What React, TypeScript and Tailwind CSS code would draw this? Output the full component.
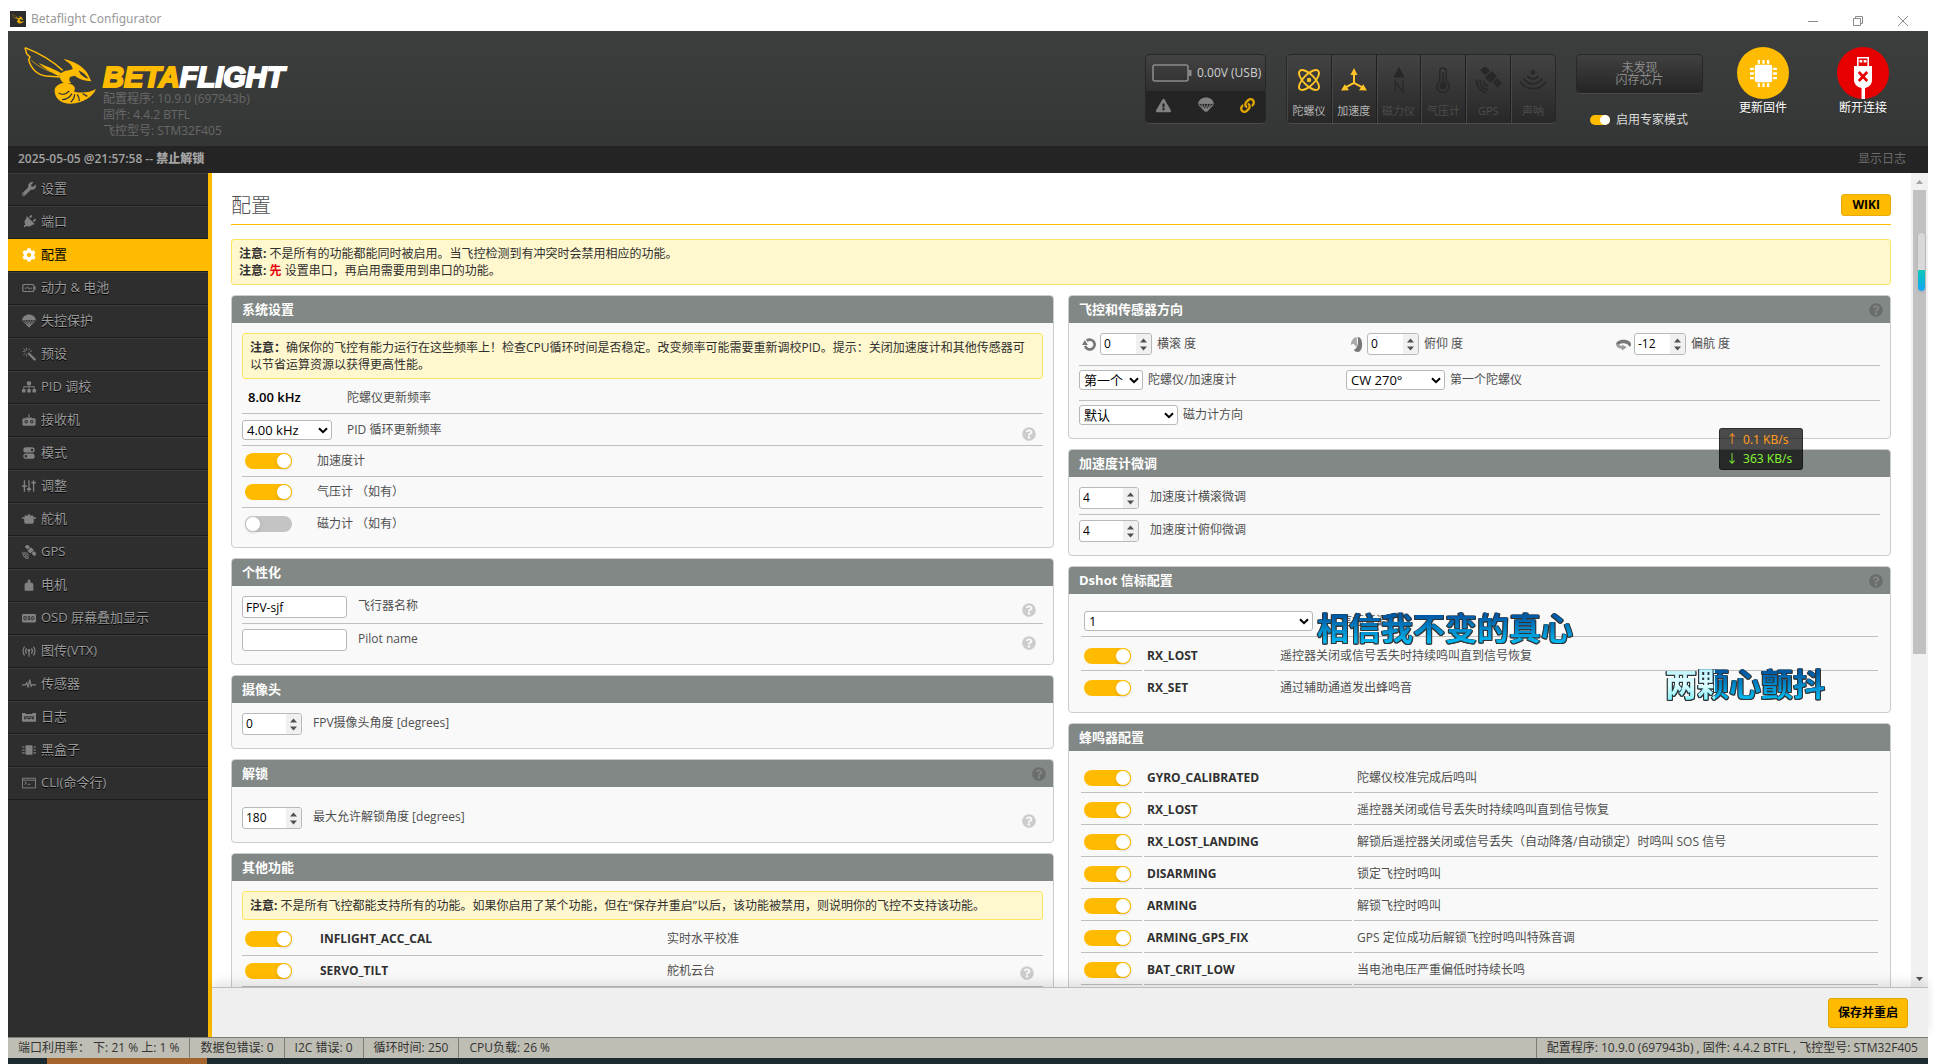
import type { ReactNode } from 'react';
import clsx from 'clsx';
import {
  FaCog,
  FaExclamationTriangle,
  FaLink,
  FaPlug,
  FaQuestionCircle,
  FaSitemap,
  FaWrench,
} from 'react-icons/fa';

interface IconProps {
  className?: string;
}

interface SvgProps extends IconProps {
  viewBox?: string;
  children: ReactNode;
}

const Svg = ({ className, viewBox = '0 0 16 16', children }: SvgProps) => (
  <svg className={className} viewBox={viewBox} fill="currentColor" aria-hidden="true">
    {children}
  </svg>
);

const BatteryIcon = ({ className }: IconProps) => (
  <Svg className={className}>
    <rect x="1" y="4" width="12.5" height="8" rx="1.2" fill="none" stroke="currentColor" strokeWidth="1.4" />
    <path d="M14 6h1.6v4H14z" />
    <path d="M3 8.2h2.4l1-1.7 1.8 3 1-1.3h2.4" fill="none" stroke="currentColor" />
  </Svg>
);

const ParachuteIcon = ({ className }: IconProps) => (
  <Svg className={className}>
    <path d="M0 7.400C.5 3.200 3.800.6 8 .6s7.500 2.600 8 6.800c-1-.9-2.600-.9-3.500 0-1-.9-2.200-.9-3 0-.8-.9-2.200-.9-3 0-.9-.9-2-.9-3 0-.9-.9-2.500-.9-3.500 0z" />
    <path
      d="M.8 7.500 7 14M15.200 7.500 9 14M3.700 7.500 7.300 14M12.300 7.500 8.700 14M6.500 7.500 8 14M9.500 7.500 8 14"
      fill="none"
      stroke="currentColor"
      strokeWidth="1.100"
    />
    <path d="M6 13h4l-2 2.600z" />
  </Svg>
);

const WandIcon = ({ className }: IconProps) => (
  <Svg className={className}>
    <path d="m6.200 7.600 1.600-1.600 7.600 7.200a1.300 1.300 0 0 1-1.900 1.900z" />
    <path
      d="M5 0.800v3.200M.8 5h3M1.800 1.800 4 4M9.200 1.500 7.200 3.700M1.600 9 3.800 7M5 8.200v2.800M9 4.700h2.400"
      fill="none"
      stroke="currentColor"
      strokeWidth="1"
    />
  </Svg>
);

const TransmitterIcon = ({ className }: IconProps) => (
  <Svg className={className}>
    <path d="M7.400 1h1.200v4H7.400z" />
    <path
      fillRule="evenodd"
      d="M5 5h6v1h3a1.500 1.500 0 0 1 1.500 1.500v5.500a1.500 1.500 0 0 1-1.500 1.500H2A1.500 1.500 0 0 1 .5 13V7.500A1.500 1.500 0 0 1 2 6h3zM4.800 8a2 2 0 1 0 0 4 2 2 0 0 0 0-4zm6.400 0a2 2 0 1 0 0 4 2 2 0 0 0 0-4z"
    />
    <circle cx="4.800" cy="10" r=".9" />
    <circle cx="11.200" cy="10" r=".9" />
  </Svg>
);

const ModesIcon = ({ className }: IconProps) => (
  <Svg className={className}>
    <path
      fillRule="evenodd"
      d="M4.500 1.500h7a3 3 0 0 1 0 6h-7a3 3 0 0 1 0-6zm7 1.500a1.500 1.500 0 1 0 0 3 1.500 1.500 0 0 0 0-3zM4.500 8.700h7a3 3 0 0 1 0 6h-7a3 3 0 0 1 0-6zm0 1.500a1.500 1.500 0 1 0 0 3 1.500 1.500 0 0 0 0-3z"
    />
  </Svg>
);

const SlidersIcon = ({ className }: IconProps) => (
  <Svg className={className}>
    <path d="M2 1.500h1.500v13H2zM.3 7h5v2.200h-5zM7.200 1.500h1.500v13H7.200zM5.600 10.500h4.800v2.200H5.600zM12.500 1.500H14v13h-1.500zM10.800 3h5v2.200h-5z" />
  </Svg>
);

const ServoIcon = ({ className }: IconProps) => (
  <Svg className={className}>
    <path d="M7 2.500h2V4h4v2h3v1.600h-2.500V11a2.500 2.500 0 0 1-2.500 2.500H5A2.500 2.500 0 0 1 2.500 11V7.600H0V6h3V4h4z" />
  </Svg>
);

const SatelliteIcon = ({ className }: IconProps) => (
  <Svg className={className} viewBox="0 0 24 24">
    <g transform="rotate(45 15 9)">
      <rect x="11.500" y="5" width="7" height="8.500" />
      <rect x="3.500" y="6" width="6.500" height="6" />
      <rect x="20" y="6" width="6.500" height="6" />
      <path d="M9 8.500h12v1H9z" />
    </g>
    <path
      d="M8.500 12.500a3.500 3.500 0 0 0 3.500 4.800M5 12a7.500 7.500 0 0 0 7 9M1.500 11.500A11.500 11.500 0 0 0 11 24"
      fill="none"
      stroke="currentColor"
      strokeWidth="1.800"
    />
  </Svg>
);

const MotorIcon = ({ className }: IconProps) => (
  <Svg className={className}>
    <path d="M8 1l1.600 2.200v2.300h1.400c1.300.3 2 1.200 2 2.400v5.600a1 1 0 0 1-1 1H4a1 1 0 0 1-1-1V7.900c0-1.200.7-2.100 2-2.400h1.400V3.200z" />
  </Svg>
);

const OsdIcon = ({ className }: IconProps) => (
  <Svg className={className}>
    <rect x="0" y="3.500" width="16" height="9.500" rx="1.500" />
    <path
      d="M2.200 6.500h2.600v3.400H2.200zM9.300 6.500H6.900v1.700h2.300v1.700H6.700M11.200 6.500h1.600l1 .8v1.800l-1 .8h-1.600z"
      fill="none"
      stroke="#2e2e2e"
    />
  </Svg>
);

const VtxIcon = ({ className }: IconProps) => (
  <Svg className={className}>
    <path
      d="M3 3C.6 5.500.6 10.500 3 13M5.300 5c-1.300 1.600-1.300 4.400 0 6M13 3c2.400 2.500 2.400 7.500 0 10M10.700 5c1.300 1.600 1.300 4.400 0 6M8 8v6.500"
      fill="none"
      stroke="currentColor"
      strokeWidth="1.400"
    />
    <circle cx="8" cy="7.300" r="1.500" />
  </Svg>
);

const PulseIcon = ({ className }: IconProps) => (
  <Svg className={className}>
    <path d="M0 9h4l1.500-2.500L7 12l1.800-9 1.600 7.500L11.500 9H16" fill="none" stroke="currentColor" strokeWidth="1.400" />
  </Svg>
);

const LogIcon = ({ className }: IconProps) => (
  <Svg className={className}>
    <path
      fillRule="evenodd"
      d="M0 3.500h4v1.200h8V3.500h4v9a1 1 0 0 1-1 1H1a1 1 0 0 1-1-1zm2.500 3.700v3.300h2l.8-1h1l.7 1h2l.7-1h1l.8 1h2V7.200z"
    />
    <path d="M4 7.800h2v1H4zM7 7.800h2v1H7zM10 7.800h2v1h-2z" />
  </Svg>
);

const BlackboxIcon = ({ className }: IconProps) => (
  <Svg className={className}>
    <rect x="4" y="2.500" width="8" height="11" rx="1" />
    <path d="M0 4h3v1.200H0zM0 7.300h3v1.200H0zM0 10.700h3v1.200H0zM13 4h3v1.200h-3zM13 7.300h3v1.200h-3zM13 10.700h3v1.200h-3z" />
  </Svg>
);

const CliIcon = ({ className }: IconProps) => (
  <Svg className={className}>
    <path d="M.6 2.600h14.800v11H.6zM.6 4.800h14.800M3 6.800l2 1.400-2 1.400M6.500 9.500h3" fill="none" stroke="currentColor" strokeWidth="1.100" />
  </Svg>
);

const GyroIcon = ({ className }: IconProps) => (
  <Svg className={className} viewBox="0 0 24 24">
    <g fill="none" stroke="currentColor" strokeWidth="1.900">
      <ellipse cx="12" cy="12" rx="13" ry="5.500" transform="rotate(45 12 12)" />
      <ellipse cx="12" cy="12" rx="13" ry="5.500" transform="rotate(-45 12 12)" />
    </g>
    <circle cx="12" cy="12" r="2.200" />
  </Svg>
);

const AccelIcon = ({ className }: IconProps) => (
  <Svg className={className} viewBox="0 0 28 26">
    <path d="M14 6v10M14 16l-9 5M14 16l9 5" stroke="currentColor" strokeWidth="2.200" />
    <path d="M14 0l3.800 7.500h-7.600zM0 24.500l4-7 4.600 6.600zM28 24.500l-4-7-4.600 6.600z" />
  </Svg>
);

const MagIcon = ({ className }: IconProps) => (
  <Svg className={className} viewBox="0 0 24 30">
    <path d="M12 0l6.500 12h-13z" />
    <path d="M7.500 29V16.500l9 12.500V16" fill="none" stroke="currentColor" strokeWidth="1.500" />
  </Svg>
);

const BaroIcon = ({ className }: IconProps) => (
  <Svg className={className} viewBox="0 0 24 28">
    <path
      d="M8.500 4.500a3.500 3.500 0 0 1 7 0v11a6.500 6.500 0 1 1-7 0z"
      fill="none"
      stroke="currentColor"
      strokeWidth="1.600"
    />
    <path d="M11 6h2v10.300a4 4 0 1 1-2 0z" />
  </Svg>
);

const SonarIcon = ({ className }: IconProps) => (
  <Svg className={className} viewBox="0 0 30 24">
    <circle cx="15" cy="4" r="2.500" />
    <path d="M9 7.500c3 4.500 9 4.500 12 0M5 10.500c5 7.500 15 7.500 20 0M1 13.500c7 10.500 21 10.500 28 0" fill="none" stroke="currentColor" strokeWidth="2" />
  </Svg>
);

const ChipIcon = ({ className }: IconProps) => (
  <Svg className={className} viewBox="0 0 28 28">
    <rect x="5" y="5" width="18" height="18" rx="2" />
    <path d="M8 0h2.400v4H8zM12.800 0h2.400v4h-2.400zM17.600 0H20v4h-2.400zM8 24h2.400v4H8zM12.800 24h2.400v4h-2.400zM17.600 24H20v4h-2.400zM0 8h4v2.400H0zM0 12.800h4v2.400H0zM0 17.600h4V20H0zM24 8h4v2.400h-4zM24 12.800h4v2.400h-4zM24 17.600h4V20h-4z" />
  </Svg>
);

const UsbIcon = ({ className }: IconProps) => (
  <Svg className={className} viewBox="0 0 18 42">
    <path fillRule="evenodd" d="M3 0h12v9h3v14c0 4-2.500 7-7 8v11H7.500V31C3 30 0 27 0 23V9h3zm1.600 1.600V9h8.800V1.600z" />
    <path d="M5.500 3h2.800v2.500H5.500zM9.700 3h2.800v2.500H9.700z" />
    <path d="M4.800 15l8.400 9M13.200 15l-8.400 9" stroke="#e60000" strokeWidth="2.600" />
  </Svg>
);

const RollIcon = ({ className }: IconProps) => (
  <Svg className={className}>
    <path d="M3.300 9.500A5.200 5.200 0 1 0 5 4" fill="none" stroke="currentColor" strokeWidth="2.800" />
    <path d="M0 8.500 3 3.200 6.300 8.500z" />
  </Svg>
);

const PitchIcon = ({ className }: IconProps) => (
  <Svg className={className}>
    <path d="M9 0c3.500 0 5 3.700 5 8s-1.500 8-5 8c-2 0-3.300-1-4-2.600C9.500 13.500 10.500 4 9 0z" />
    <path d="M8.500 3.500v7L6.300 9.300C5.800 7.500 5 6.800 2 8.500 2 4 5 .5 8 0z" opacity=".6" />
  </Svg>
);

const YawIcon = ({ className }: IconProps) => (
  <Svg className={className}>
    <path d="M0 7.500C.5 4.500 4 2.800 8 2.800s8 1.700 8 4.700c0 1.500-.5 2.500-1.500 3.200-1-3.200-7-5.200-11-3z" />
    <path d="M0 7.500c0 3.300 3 4.800 6 5l.5 2 5-3.500-5-3 .2 1.500C5.500 9.500 3.500 9 3.500 7.500z" opacity=".7" />
  </Svg>
);

const BeeLogo = ({ className }: IconProps) => (
  <Svg className={className} viewBox="0 0 216 172">
    <g fill="none" stroke="currentColor" strokeLinejoin="round">
      <path d="M3 4 8 22 18 32 14 40C20 66 40 86 66 89L110 92M3 4C44 20 86 44 116 72" strokeWidth="4.500" />
      <path d="M22 42C44 62 76 78 108 84" strokeWidth="2" />
    </g>
    <path d="M44 50C66 60 96 70 114 82L104 90C88 80 62 68 44 50z" />
    <path d="M118 38C156 46 178 62 190 80L202 105C182 104 164 98 152 88L138 92C134 100 136 106 142 110L120 110C108 104 104 90 112 80C124 70 136 74 146 68C146 56 132 48 118 38z" />
    <path d="M164 72C176 78 186 86 194 98C180 94 168 86 164 72z" fill="#383a39" />
    <path d="M92 128C100 112 116 108 134 111C152 116 156 126 150 136C176 142 198 138 216 128C206 152 178 170 140 172C110 172 90 156 92 128z" />
    <path
      d="M104 140C116 148 126 144 136 134M114 160C128 160 138 152 144 142M140 168C148 160 152 152 152 144M166 164C166 156 164 150 160 144M190 150 176 142"
      fill="none"
      stroke="#373938"
      strokeWidth="4"
    />
  </Svg>
);

const PlugIcon = ({ className }: IconProps) => <FaPlug className={clsx(className, 'rotate-45')} />;

const MENU = [
  { label: '设置', Icon: FaWrench },
  { label: '端口', Icon: PlugIcon },
  { label: '配置', Icon: FaCog },
  { label: '动力 & 电池', Icon: BatteryIcon },
  { label: '失控保护', Icon: ParachuteIcon },
  { label: '预设', Icon: WandIcon },
  { label: 'PID 调校', Icon: FaSitemap },
  { label: '接收机', Icon: TransmitterIcon },
  { label: '模式', Icon: ModesIcon },
  { label: '调整', Icon: SlidersIcon },
  { label: '舵机', Icon: ServoIcon },
  { label: 'GPS', Icon: SatelliteIcon },
  { label: '电机', Icon: MotorIcon },
  { label: 'OSD 屏幕叠加显示', Icon: OsdIcon },
  { label: '图传(VTX)', Icon: VtxIcon },
  { label: '传感器', Icon: PulseIcon },
  { label: '日志', Icon: LogIcon },
  { label: '黑盒子', Icon: BlackboxIcon },
  { label: 'CLI(命令行)', Icon: CliIcon },
];

const SENSORS = [
  { label: '陀螺仪', Icon: GyroIcon, on: true },
  { label: '加速度', Icon: AccelIcon, on: true },
  { label: '磁力仪', Icon: MagIcon, on: false },
  { label: '气压计', Icon: BaroIcon, on: false },
  { label: 'GPS', Icon: SatelliteIcon, on: false },
  { label: '声呐', Icon: SonarIcon, on: false },
];

const DSHOT_BEACONS = [
  { name: 'RX_LOST', desc: '遥控器关闭或信号丢失时持续鸣叫直到信号恢复' },
  { name: 'RX_SET', desc: '通过辅助通道发出蜂鸣音' },
];

const BEEPERS = [
  { name: 'GYRO_CALIBRATED', desc: '陀螺仪校准完成后鸣叫' },
  { name: 'RX_LOST', desc: '遥控器关闭或信号丢失时持续鸣叫直到信号恢复' },
  { name: 'RX_LOST_LANDING', desc: '解锁后遥控器关闭或信号丢失（自动降落/自动锁定）时鸣叫 SOS 信号' },
  { name: 'DISARMING', desc: '锁定飞控时鸣叫' },
  { name: 'ARMING', desc: '解锁飞控时鸣叫' },
  { name: 'ARMING_GPS_FIX', desc: 'GPS 定位成功后解锁飞控时鸣叫特殊音调' },
  { name: 'BAT_CRIT_LOW', desc: '当电池电压严重偏低时持续长鸣' },
];

const FEATURES = [
  { name: 'INFLIGHT_ACC_CAL', desc: '实时水平校准', help: false },
  { name: 'SERVO_TILT', desc: '舵机云台', help: true },
];

const STATS = ['端口利用率： 下: 21 % 上: 1 %', '数据包错误: 0', 'I2C 错误: 0', '循环时间: 250', 'CPU负载: 26 %'];

const Help = ({ className }: IconProps) => (
  <FaQuestionCircle className={clsx('size-[14px] shrink-0', className)} aria-hidden="true" />
);

const Toggle = ({ id, checked = false }: { id: string; checked?: boolean }) => (
  <input
    id={id}
    type="checkbox"
    role="switch"
    defaultChecked={checked}
    className="block h-4 w-[47px] shrink-0 appearance-none rounded-full bg-[#c4c4c4] before:block before:size-4 before:rounded-full before:border before:border-[#c4c4c4] before:bg-white before:shadow checked:bg-[#ffbb00] checked:before:ml-[31px] checked:before:border-[#ffbb00]"
  />
);

const Select = ({ id, value, className }: { id: string; value: string; className: string }) => (
  <div className={clsx('relative shrink-0', className)}>
    <select
      id={id}
      defaultValue={value}
      className="block h-5 w-full appearance-none rounded-[3px] border border-[#b8b8b8] bg-white pl-1 text-[13px] leading-4 text-black"
    >
      <option>{value}</option>
    </select>
    <svg className="pointer-events-none absolute top-[7px] right-1 h-[7px] w-[10px]" viewBox="0 0 10 7" aria-hidden="true">
      <path d="M1 1.200 5 5.200 9 1.200" fill="none" stroke="#000" strokeWidth="2" />
    </svg>
  </div>
);

const NumberInput = ({ id, value, className }: { id: string; value: number; className: string }) => (
  <div className={clsx('flex h-[22px] shrink-0 overflow-hidden rounded-[3px] border border-[#b8b8b8] bg-white', className)}>
    <input
      id={id}
      type="number"
      defaultValue={value}
      className="w-full min-w-0 appearance-none pl-[3px] text-xs text-black [appearance:textfield] [&::-webkit-inner-spin-button]:appearance-none"
    />
    <svg className="h-5 w-[15px] shrink-0 bg-[#f0f0f0]" viewBox="0 0 15 20" aria-hidden="true">
      <path d="M4 8.500h7L7.500 4.500zM4 12.500h7l-3.500 4z" fill="#505050" />
    </svg>
  </div>
);

const Note = ({ children }: { children: ReactNode }) => (
  <div className="rounded-[3px] border border-[#ffe55f] bg-[#fff7cd] px-[7px] py-[5px] leading-[17px] text-[#303030]">
    {children}
  </div>
);

interface CardProps {
  title: string;
  help?: boolean;
  className?: string;
  children: ReactNode;
}

const Card = ({ title, help, className, children }: CardProps) => (
  <section className="overflow-hidden rounded-[4px] border border-[#ccc] bg-[#f9f9f9]">
    <header className="flex h-[27px] items-center justify-between bg-[#828885] pr-[7px] pl-[10px] text-[13px] font-bold text-white">
      <h2>{title}</h2>
      {help && <Help className="text-[#6a6d6b]" />}
    </header>
    <div className={clsx('px-[10px] pt-[10px]', className)}>{children}</div>
  </section>
);

const BeeperTable = ({ prefix, rows, nameWidth }: { prefix: string; rows: typeof BEEPERS; nameWidth: string }) => (
  <table className="w-full table-fixed border-separate border-spacing-[2px] text-left">
    <tbody>
      {rows.map(({ name, desc }, i) => {
        const line = prefix === 'dshot' && i === rows.length - 1 ? '' : 'border-b border-[#bfbfbf]';
        return (
          <tr key={name} className="h-[30px]">
            <td className={clsx('w-[61px] px-[3px]', line)}>
              <Toggle id={`${prefix}-${name}`} checked />
            </td>
            <th scope="row" className={clsx('px-[3px] font-bold text-[#303030]', nameWidth, line)}>
              <label htmlFor={`${prefix}-${name}`}>{name}</label>
            </th>
            <td className={clsx('px-[3px]', line)}>{desc}</td>
          </tr>
        );
      })}
    </tbody>
  </table>
);

const TitleBar = () => (
  <div className="flex h-[31px] shrink-0 items-end justify-between pr-[15px] pl-[2px]">
    <div className="flex h-6 items-center gap-[5px] font-['Noto_Sans',sans-serif] text-xs text-[#999]">
      <span className="flex size-4 items-center justify-center bg-[#2c2c2c] text-[#ffbb00]">
        <BeeLogo className="w-3" />
      </span>
      Betaflight Configurator
    </div>
    <div className="flex gap-[25px] text-[#8a8a8a]">
      <button type="button" aria-label="最小化" className="flex size-5 items-center justify-center">
        <svg className="size-[10px]" viewBox="0 0 10 10">
          <path d="M0 5.500h10" stroke="currentColor" />
        </svg>
      </button>
      <button type="button" aria-label="还原" className="flex size-5 items-center justify-center">
        <svg className="size-[10px]" viewBox="0 0 10 10" fill="none" stroke="currentColor">
          <path d="M.5 2.500h7v7h-7zM2.500 2.500v-2h7v7h-2" />
        </svg>
      </button>
      <button type="button" aria-label="关闭" className="flex size-5 items-center justify-center">
        <svg className="size-[10px]" viewBox="0 0 10 10" stroke="currentColor">
          <path d="M0 0l10 10M10 0 0 10" />
        </svg>
      </button>
    </div>
  </div>
);

const Header = () => (
  <header className="flex h-[115px] shrink-0 justify-between bg-linear-to-b from-[#3d3f3e] to-[#343635] pr-[26px] pl-4">
    <div className="flex gap-[7px] pt-[15px]">
      <BeeLogo className="h-[58px] w-[72px] text-[#ffbb00]" />
      <div className="pt-[17px]">
        <div className="font-['Liberation_Sans',Arial,sans-serif] text-[29px] leading-7 font-bold text-white italic [-webkit-text-stroke:2px_currentColor]">
          <span className="text-[#ffbb00]">BETA</span>FLIGHT
        </div>
        <div className="leading-4 text-[#686868]">
          <p>配置程序: 10.9.0 (697943b)</p>
          <p>固件: 4.4.2 BTFL</p>
          <p>飞控型号: STM32F405</p>
        </div>
      </div>
    </div>

    <div className="flex items-start gap-5 pt-[16px] text-white">
      <div className="mt-[7px] h-[70px] w-[121px] overflow-hidden rounded-[5px] border border-b-[#4c4c4c] border-[#272727] bg-[#242424]">
        <div className="flex h-9 items-center bg-linear-to-b from-[#434343] to-[#2f2f2f] pl-[6px]">
          <svg className="h-[18px] w-10 text-[#8a8a8a]" viewBox="0 0 40 18" fill="none" stroke="currentColor">
            <rect x="1" y="1" width="35" height="16" rx="2" strokeWidth="1.600" />
            <path d="M38 6v6" strokeWidth="3" />
          </svg>
          <span className="pl-[5px] text-xs text-[#d0d0d0]">0.00V (USB)</span>
        </div>
        <div className="flex h-8 items-center justify-between px-[10px] pb-1 text-[#818181]">
          <FaExclamationTriangle className="size-[15px]" />
          <ParachuteIcon className="size-4" />
          <FaLink className="size-[15px] text-[#e0a500]" />
        </div>
      </div>

      <ul className="mt-[7px] flex h-[70px] w-[270px] overflow-hidden rounded-[5px] border border-b-[#4c4c4c] border-[#272727] bg-linear-to-b from-[#434343] to-[#282828]">
        {SENSORS.map(({ label, Icon, on }) => (
          <li
            key={label}
            className={clsx(
              'flex flex-1 flex-col items-center border-l border-[#1f1f1f] shadow-[inset_1px_0_0_#474747] first:border-l-0',
              on ? 'text-[#b5b5b5]' : 'text-[#4c4c4c]',
            )}
          >
            <div className="flex h-[50px] items-center justify-center">
              <Icon className={clsx('w-7', on ? 'h-6 text-[#ffc427]' : 'h-[26px] text-[#282828]')} />
            </div>
            <span className="text-[11px] leading-[11px]">{label}</span>
          </li>
        ))}
      </ul>

      <div className="mt-[7px] w-[127px]">
        <p className="flex h-10 items-center justify-center rounded-[5px] border border-b-[#4c4c4c] border-[#272727] bg-linear-to-b from-[#414141] to-[#242424] text-center leading-3 text-[#8c8c8c]">
          未发现
          <br />
          闪存芯片
        </p>
        <label className="mt-[18px] ml-[14px] flex items-center gap-[6px] leading-4 text-[#ddd]">
          <input
            type="checkbox"
            role="switch"
            defaultChecked
            className="h-[10px] w-5 appearance-none rounded-full bg-[#ffbb00] before:ml-[10px] before:block before:size-[10px] before:rounded-full before:bg-white"
          />
          启用专家模式
        </label>
      </div>

      <div className="ml-[14px] flex gap-12 pr-[13px]">
        <button type="button" className="flex w-[52px] flex-col items-center">
          <span className="flex size-[52px] items-center justify-center rounded-full bg-[#ffbb00]">
            <ChipIcon className="size-[27px]" />
          </span>
          <span className="leading-[18px] text-shadow-sm">更新固件</span>
        </button>
        <button type="button" className="flex w-[52px] flex-col items-center">
          <span className="flex size-[52px] items-end justify-center rounded-full bg-[#e60000]">
            <UsbIcon className="h-[42px] w-[18px]" />
          </span>
          <span className="leading-[18px] text-shadow-sm">断开连接</span>
        </button>
      </div>
    </div>
  </header>
);

const Sidebar = () => (
  <nav className="w-[204px] shrink-0 border-r-4 border-[#ffbb00] bg-[#2e2e2e]">
    <ul>
      {MENU.map(({ label, Icon }) => {
        const active = label === '配置';
        return (
          <li key={label}>
            <a
              href="#"
              className={clsx(
                'flex h-[33px] items-center gap-[5px] border-y border-b-[#1c1c1c] pb-[2px] pl-[14px] text-[13px]',
                active ? 'border-t-[#ffbb00] bg-[#ffbb00] text-black' : 'border-t-[#3b3b3b] text-[#999] text-shadow-[0_1px_0_#000]',
              )}
            >
              <Icon className={clsx('size-[14px]', active ? 'text-white' : 'text-[#818181]')} />
              {label}
            </a>
          </li>
        );
      })}
    </ul>
  </nav>
);

const LeftColumn = () => (
  <div className="flex flex-col gap-[10px]">
    <Card title="系统设置" className="pb-2">
      <Note>
        <b>注意：</b>
        确保你的飞控有能力运行在这些频率上！检查CPU循环时间是否稳定。改变频率可能需要重新调校PID。提示：关闭加速度计和其他传感器可以节省运算资源以获得更高性能。
      </Note>
      <div className="mt-1 flex h-[31px] items-center border-b border-[#bfbfbf]">
        <span className="w-[105px] pl-[6px] text-[13px] font-semibold text-black">8.00 kHz</span>
        <span>陀螺仪更新频率</span>
      </div>
      <div className="flex h-8 items-center border-b border-[#bfbfbf]">
        <Select id="pid-rate" value="4.00 kHz" className="w-[90px]" />
        <label htmlFor="pid-rate" className="flex-1 pl-[15px]">
          PID 循环更新频率
        </label>
        <Help className="mt-2 mr-[7px] text-[#ccc]" />
      </div>
      <div className="flex h-[31px] items-center gap-[25px] border-b border-[#bfbfbf] pl-[3px]">
        <Toggle id="acc" checked />
        <label htmlFor="acc">加速度计</label>
      </div>
      <div className="flex h-[31px] items-center gap-[25px] border-b border-[#bfbfbf] pl-[3px]">
        <Toggle id="baro" checked />
        <label htmlFor="baro">气压计 （如有）</label>
      </div>
      <div className="flex h-[31px] items-center gap-[25px] pl-[3px]">
        <Toggle id="mag" />
        <label htmlFor="mag">磁力计 （如有）</label>
      </div>
    </Card>

    <Card title="个性化" className="pb-[13px]">
      <div className="flex border-b border-[#bfbfbf] pb-[5px]">
        <input
          id="craft"
          type="text"
          defaultValue="FPV-sjf"
          className="h-[22px] w-[105px] rounded-[3px] border border-[#b8b8b8] bg-white px-[3px] text-black"
        />
        <label htmlFor="craft" className="flex-1 pl-[11px] leading-5">
          飞行器名称
        </label>
        <Help className="mt-[7px] mr-[7px] text-[#ccc]" />
      </div>
      <div className="flex pt-[5px]">
        <input
          id="pilot"
          type="text"
          className="h-[22px] w-[105px] rounded-[3px] border border-[#b8b8b8] bg-white px-[3px] text-black"
        />
        <label htmlFor="pilot" className="flex-1 pl-[11px] leading-5">
          Pilot name
        </label>
        <Help className="mt-[7px] mr-[7px] text-[#ccc]" />
      </div>
    </Card>

    <Card title="摄像头" className="pb-[13px]">
      <div className="flex">
        <NumberInput id="cam-angle" value={0} className="w-[60px]" />
        <label htmlFor="cam-angle" className="pl-[11px] leading-5">
          FPV摄像头角度 [degrees]
        </label>
      </div>
    </Card>

    <Card title="解锁" help className="pb-[13px]">
      <div className="flex pt-[10px]">
        <NumberInput id="arm-angle" value={180} className="w-[60px]" />
        <label htmlFor="arm-angle" className="flex-1 pl-[11px] leading-5">
          最大允许解锁角度 [degrees]
        </label>
        <Help className="mt-[7px] mr-[7px] text-[#ccc]" />
      </div>
    </Card>

    <Card title="其他功能" className="pb-10">
      <Note>
        <b>注意:</b>
        {' 不是所有飞控都能支持所有的功能。如果你启用了某个功能，但在“保存并重启”以后，该功能被禁用，则说明你的飞控不支持该功能。'}
      </Note>
      <table className="mt-1 w-full table-fixed text-left">
        <tbody>
          {FEATURES.map(({ name, desc, help }) => (
            <tr key={name} className="h-[31px] border-b border-[#bfbfbf]">
              <td className="w-[75px] px-[3px]">
                <Toggle id={name} checked />
              </td>
              <th scope="row" className="w-[347px] px-[3px] font-bold text-[#303030]">
                <label htmlFor={name}>{name}</label>
              </th>
              <td className="px-[3px]">{desc}</td>
              <td className="w-[23px]">{help && <Help className="mt-1 text-[#ccc]" />}</td>
            </tr>
          ))}
        </tbody>
      </table>
    </Card>
  </div>
);

const RightColumn = () => (
  <div className="flex flex-col gap-[10px]">
    <Card title="飞控和传感器方向" help className="pb-[13px]">
      <div className="grid grid-cols-3 border-b border-[#bfbfbf] pb-[10px] text-[#777]">
        <div className="flex items-center gap-[3px] pl-[3px]">
          <RollIcon className="size-[15px]" />
          <NumberInput id="roll" value={0} className="w-[52px]" />
          <label htmlFor="roll" className="pl-[2px] text-[#4f4f4f]">
            横滚 度
          </label>
        </div>
        <div className="flex items-center gap-[3px] pl-[3px]">
          <PitchIcon className="size-[15px]" />
          <NumberInput id="pitch" value={0} className="w-[52px]" />
          <label htmlFor="pitch" className="pl-[2px] text-[#4f4f4f]">
            俯仰 度
          </label>
        </div>
        <div className="flex items-center gap-[3px] pl-[3px]">
          <YawIcon className="size-[15px]" />
          <NumberInput id="yaw" value={-12} className="w-[52px]" />
          <label htmlFor="yaw" className="pl-[2px] text-[#4f4f4f]">
            偏航 度
          </label>
        </div>
      </div>
      <div className="grid grid-cols-3 border-b border-[#bfbfbf] pt-1 pb-[10px]">
        <div className="flex items-center gap-[5px]">
          <Select id="gyro-use" value="第一个" className="w-16" />
          <label htmlFor="gyro-use">陀螺仪/加速度计</label>
        </div>
        <div className="flex items-center gap-[5px]">
          <Select id="gyro-align" value="CW 270°" className="w-[99px]" />
          <label htmlFor="gyro-align">第一个陀螺仪</label>
        </div>
      </div>
      <div className="flex items-center gap-[5px] pt-1">
        <Select id="mag-align" value="默认" className="w-[99px]" />
        <label htmlFor="mag-align">磁力计方向</label>
      </div>
    </Card>

    <Card title="加速度计微调" className="pb-[13px]">
      <div className="flex border-b border-[#bfbfbf] pb-[5px]">
        <NumberInput id="trim-roll" value={4} className="w-[60px]" />
        <label htmlFor="trim-roll" className="pl-[11px] leading-5">
          加速度计横滚微调
        </label>
      </div>
      <div className="flex pt-[5px]">
        <NumberInput id="trim-pitch" value={4} className="w-[60px]" />
        <label htmlFor="trim-pitch" className="pl-[11px] leading-5">
          加速度计俯仰微调
        </label>
      </div>
    </Card>

    <Card title="Dshot 信标配置" help className="pb-[7px]">
      <div className="mx-[2px] mb-[2px] flex items-center gap-[27px] border-b border-[#bfbfbf] pt-[7px] pb-[5px] pl-[3px]">
        <Select id="beacon-tone" value="1" className="w-[229px]" />
        <label htmlFor="beacon-tone">信标音调</label>
      </div>
      <BeeperTable prefix="dshot" rows={DSHOT_BEACONS} nameWidth="w-[131px]" />
    </Card>

    <Card title="蜂鸣器配置" className="pb-10">
      <BeeperTable prefix="beeper" rows={BEEPERS} nameWidth="w-[208px]" />
    </Card>
  </div>
);

const ScrollBar = () => (
  <div className="flex w-[17px] shrink-0 flex-col bg-[#f1f1f1] px-[2px]" aria-hidden="true">
    <svg className="h-[17px] w-[13px]" viewBox="0 0 13 17">
      <path d="M3 11h7L6.500 7z" fill="#a3a3a3" />
    </svg>
    <div className="flex h-[57%] flex-col items-end bg-[#c1c1c1] pt-[43px] pr-[1px]">
      <div className="flex h-[58px] w-[7px] items-end overflow-hidden rounded-full bg-[#d9d9d9] shadow-sm">
        <div className="h-[21px] w-full bg-linear-to-b from-[#12c9b8] to-[#1aa4f5]" />
      </div>
    </div>
    <svg className="mt-auto h-[17px] w-[13px]" viewBox="0 0 13 17">
      <path d="M3 7h7l-3.500 4z" fill="#505050" />
    </svg>
  </div>
);

// Desktop widgets floating over the configurator window
const Overlays = () => (
  <>
    <div className="absolute top-[428px] right-[131px] flex h-[42px] w-[84px] flex-col justify-center rounded-[3px] border border-black/40 bg-black/70 pl-[6px] font-['Noto_Sans','Noto_Sans_CJK_SC',sans-serif] text-xs leading-[19px]">
      <p className="flex gap-[5px] text-[#ff9a1f]">
        <span>↑</span>0.1 KB/s
      </p>
      <p className="flex gap-[5px] text-[#83ee33]">
        <span>↓</span>363 KB/s
      </p>
    </div>
    <p className="absolute top-[604px] right-[361px] bg-linear-to-b from-[#0059a5] from-25% to-[#00b8f0] to-80% bg-clip-text text-[32px] leading-[48px] font-bold text-transparent [filter:drop-shadow(1px_0_0_#333)_drop-shadow(-1px_0_0_#333)_drop-shadow(0_1px_0_#333)]">
      相信我不变的真心
    </p>
    <p className="absolute top-[660px] right-[109px] bg-[linear-gradient(#9fe8f5,#e4ffff_50%,#5fe8ee),linear-gradient(#0059a5_25%,#00b8f0_80%)] bg-[length:50px_100%,100%_100%] bg-clip-text bg-no-repeat text-[32px] leading-[48px] font-bold text-transparent [filter:drop-shadow(1px_0_0_#333)_drop-shadow(-1px_0_0_#333)_drop-shadow(0_1px_0_#333)]">
      两颗心颤抖
    </p>
  </>
);

export default function App() {
  return (
    <div className="relative flex h-screen flex-col overflow-hidden bg-white pr-[6px] pl-2 font-['Open_Sans','Noto_Sans_CJK_SC',sans-serif] text-xs text-[#4f4f4f]">
      <TitleBar />
      <Header />
      <div className="flex h-[27px] shrink-0 items-center justify-between bg-[#242424] pr-[22px] pb-[2px] pl-[10px] font-semibold text-[#a3a3a3]">
        <p>
          2025-05-05 @21:57:58 -- <b>禁止解锁</b>
        </p>
        <button type="button" className="font-normal text-[#6b6b6b]">
          显示日志
        </button>
      </div>

      <div className="flex min-h-0 flex-1">
        <Sidebar />
        <div className="flex min-w-0 flex-1 flex-col">
          <div className="flex min-h-0 flex-1">
            <main className="min-w-0 flex-1 overflow-hidden pt-[21px] pr-5 pl-[19px]">
              <div className="flex items-center justify-between border-b border-[#ffbb00] pb-2">
                <h1 className="text-xl leading-[21px] font-light">配置</h1>
                <a
                  href="#"
                  className="flex h-[22px] items-center rounded-[3px] border border-[#e8ad0c] bg-[#ffbb00] px-[10px] font-bold text-black"
                >
                  WIKI
                </a>
              </div>
              <div className="mt-[14px] mb-[10px]">
                <Note>
                  <p>
                    <b>注意:</b> 不是所有的功能都能同时被启用。当飞控检测到有冲突时会禁用相应的功能。
                  </p>
                  <p>
                    <b>注意:</b> <b className="text-red-600">先</b> 设置串口，再启用需要用到串口的功能。
                  </p>
                </Note>
              </div>
              <div className="grid grid-cols-2 gap-[14px]">
                <LeftColumn />
                <RightColumn />
              </div>
            </main>
            <ScrollBar />
          </div>
          <div className="relative flex h-[50px] shrink-0 items-center justify-end border-t border-[#bdbdbd] bg-[#efefef] pr-5 shadow-[0_-5px_10px_rgba(0,0,0,0.1)]">
            <button
              type="button"
              className="h-[30px] w-20 rounded-[3px] border border-[#e0a500] bg-[#ffbb00] font-bold text-black"
            >
              保存并重启
            </button>
          </div>
        </div>
      </div>

      <footer className="flex h-[21px] shrink-0 items-stretch justify-between border-t border-[#7d7e75] bg-[#bfbeb4] leading-5 text-[#333]">
        <ul className="flex whitespace-pre">
          {STATS.map((stat) => (
            <li key={stat} className="border-r border-[#7d7e75] px-[10px] last:border-r-0">
              {stat}
            </li>
          ))}
        </ul>
        <p className="border-l border-[#7d7e75] px-[10px]">
          配置程序: 10.9.0 (697943b) , 固件: 4.4.2 BTFL , 飞控型号: STM32F405
        </p>
      </footer>
      <div className="flex h-[6px] shrink-0 bg-[#1b2b30] pl-[39px]">
        <div className="w-40 bg-[#a5642d]" />
      </div>

      <Overlays />
    </div>
  );
}
